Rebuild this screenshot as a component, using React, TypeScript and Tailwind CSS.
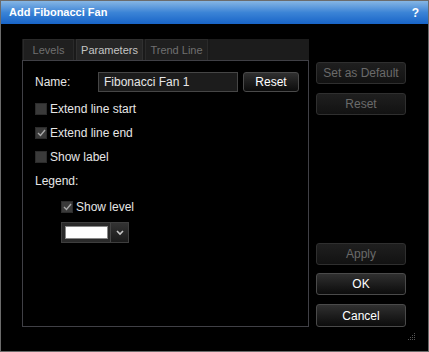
const font = { fontFamily: '"Liberation Sans", Arial, sans-serif' }

const Check = ({ checked }: { checked?: boolean }) => (
  <span className="w-[12px] h-[12px] bg-[#3a3a3a] border border-[#2c2c2c] flex items-center justify-center shrink-0">
    {checked && (
      <svg width="9" height="8" viewBox="0 0 9 8">
        <path d="M1 4 L3.5 6.5 L8 1" stroke="#a8a8a8" strokeWidth="1.4" fill="none" />
      </svg>
    )}
  </span>
)

const Btn = ({ label, disabled, className = '' }: { label: string; disabled?: boolean; className?: string }) => (
  <div
    className={`flex items-center justify-center rounded-[3px] border text-[12px] ${
      disabled
        ? 'border-[#2f2f2f] bg-gradient-to-b from-[#1f1f1f] to-[#121212] text-[#6a6a6a]'
        : 'border-[#4a4a4a] bg-gradient-to-b from-[#303030] to-[#0c0c0c] text-white'
    } ${className}`}
  >
    {label}
  </div>
)

export default function App() {
  return (
    <div style={font} className="w-[429px] h-[352px] border border-[#6b6b6b] bg-black flex flex-col text-[#e6e6e6]">
      <div className="h-[23px] bg-gradient-to-b from-[#86b6e4] via-[#3b84d6] to-[#1764c8] flex items-center justify-between px-[8px] text-white font-bold text-[11px]">
        <span>Add Fibonacci Fan</span>
        <span className="text-[12px] mr-[1px]">?</span>
      </div>

      <div className="flex pl-[21px] pt-[15px]">
        <div className="w-[287px] flex flex-col">
          <div className="h-[21px] flex bg-[#1a1a1a] pl-[1px] gap-[2px] text-[11px]">
            <div className="w-[51px] bg-[#1f1f1f] border-t border-x border-[#2a2a2a] flex items-center justify-center text-[#707070]">Levels</div>
            <div className="w-[67px] bg-[#262626] border-t border-x border-[#303030] flex items-center justify-center text-[#c4c4c4]">Parameters</div>
            <div className="w-[63px] bg-[#1f1f1f] border-t border-x border-[#2a2a2a] flex items-center justify-center text-[#707070]">Trend Line</div>
            <div className="flex-1 bg-[#1c1c1c]" />
          </div>

          <div className="h-[267px] border border-[#404046] pl-[12px] pt-[11px] text-[12px]">
            <div className="h-[20px] flex items-center">
              <span className="w-[63px]">Name:</span>
              <div className="w-[140px] h-[20px] bg-[#1c1c1c] border border-[#464646] flex items-center pl-[5px]">Fibonacci Fan 1</div>
              <Btn label="Reset" className="ml-[5px] w-[56px] h-[20px]" />
            </div>

            <div className="mt-[5px] h-[24px] flex items-center gap-[3px]">
              <Check />
              <span>Extend line start</span>
            </div>
            <div className="h-[24px] flex items-center gap-[3px]">
              <Check checked />
              <span>Extend line end</span>
            </div>
            <div className="h-[24px] flex items-center gap-[3px]">
              <Check />
              <span>Show label</span>
            </div>
            <div className="h-[24px] flex items-center">Legend:</div>
            <div className="mt-[2px] h-[24px] flex items-center gap-[3px] ml-[26px]">
              <Check checked />
              <span>Show level</span>
            </div>
            <div className="mt-[3px] ml-[26px] w-[68px] h-[21px] bg-[#2a2a2a] border border-[#3e3e3e] flex items-center pl-[3px] gap-[2px]">
              <div className="w-[43px] h-[13px] bg-white border border-[#888]" />
              <div className="w-[18px] h-[19px] bg-gradient-to-b from-[#333] to-[#1a1a1a] border-l border-[#444] flex items-center justify-center">
                <svg width="8" height="6" viewBox="0 0 8 6">
                  <path d="M1 1 L4 4 L7 1" stroke="#c8c8c8" strokeWidth="1.6" fill="none" />
                </svg>
              </div>
            </div>
          </div>
        </div>

        <div className="ml-[7px] w-[90px] pt-[23px] flex flex-col">
          <Btn label="Set as Default" disabled className="h-[22px]" />
          <Btn label="Reset" disabled className="h-[22px] mt-[9px]" />
          <Btn label="Apply" disabled className="h-[22px] mt-[128px]" />
          <Btn label="OK" className="h-[22px] mt-[8px]" />
          <Btn label="Cancel" className="h-[23px] mt-[9px]" />
          <div className="flex justify-end mt-[6px] mr-[-10px]">
            <svg width="8" height="8" viewBox="0 0 8 8">
              <rect x="6" y="0" width="1" height="1" fill="#555" />
              <rect x="4" y="2" width="1" height="1" fill="#555" />
              <rect x="6" y="2" width="1" height="1" fill="#555" />
              <rect x="2" y="4" width="1" height="1" fill="#555" />
              <rect x="4" y="4" width="1" height="1" fill="#555" />
              <rect x="6" y="4" width="1" height="1" fill="#555" />
              <rect x="0" y="6" width="1" height="1" fill="#555" />
              <rect x="2" y="6" width="1" height="1" fill="#555" />
              <rect x="4" y="6" width="1" height="1" fill="#555" />
              <rect x="6" y="6" width="1" height="1" fill="#555" />
            </svg>
          </div>
        </div>
      </div>
    </div>
  )
}
